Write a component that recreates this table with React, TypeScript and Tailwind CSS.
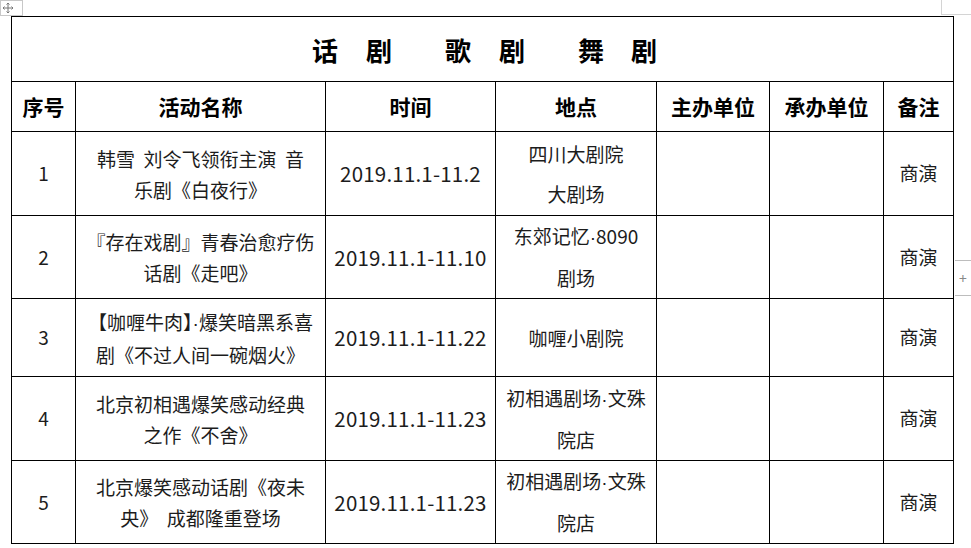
import React from "react";

type Row = {
  no: string;
  name: React.ReactNode;
  time: string;
  place: React.ReactNode;
  note: string;
};

// half-width middle dot, as in the source document
const Dot = () => <span style={{ fontFamily: '"Liberation Sans", sans-serif' }}>·</span>;

const rows: Row[] = [
  {
    no: "1",
    name: (
      <>
        韩雪&nbsp; 刘令飞领衔主演&nbsp; 音
        <br />
        乐剧《白夜行》
      </>
    ),
    time: "2019.11.1-11.2",
    place: (
      <>
        四川大剧院
        <br />
        大剧场
      </>
    ),
    note: "商演",
  },
  {
    no: "2",
    name: (
      <>
        『存在戏剧』青春治愈疗伤
        <br />
        话剧《走吧》
      </>
    ),
    time: "2019.11.1-11.10",
    place: (
      <>
        东郊记忆<Dot />8090
        <br />
        剧场
      </>
    ),
    note: "商演",
  },
  {
    no: "3",
    name: (
      <>
        【咖喱牛肉】<Dot />爆笑暗黑系喜
        <br />
        剧《不过人间一碗烟火》
      </>
    ),
    time: "2019.11.1-11.22",
    place: <>咖喱小剧院</>,
    note: "商演",
  },
  {
    no: "4",
    name: (
      <>
        北京初相遇爆笑感动经典
        <br />
        之作《不舍》
      </>
    ),
    time: "2019.11.1-11.23",
    place: (
      <>
        初相遇剧场<Dot />文殊
        <br />
        院店
      </>
    ),
    note: "商演",
  },
  {
    no: "5",
    name: (
      <>
        北京爆笑感动话剧《夜未
        <br />
        央》&nbsp; 成都隆重登场
      </>
    ),
    time: "2019.11.1-11.23",
    place: (
      <>
        初相遇剧场<Dot />文殊
        <br />
        院店
      </>
    ),
    note: "商演",
  },
];

const rowHeights = ["h-[84px]", "h-[83px]", "h-[78px]", "h-[84px]", "h-[83px]"];

const headers = ["序号", "活动名称", "时间", "地点", "主办单位", "承办单位", "备注"];

export default function App() {
  return (
    <div
      className="relative w-[971px] h-[548px] overflow-hidden bg-white text-[#1c1c1c]"
      style={{ fontFamily: '"Noto Sans CJK SC", "Noto Sans", sans-serif' }}
    >
      {/* table move handle */}
      <div className="absolute left-0 top-0 w-[23px] h-[16px] border border-[#c8c8c8] bg-white flex items-center justify-start pl-[1px]">
        <svg width="12" height="12" viewBox="0 0 12 12" fill="none" stroke="#777" strokeWidth="1">
          <path d="M6 1v10M1 6h10M4.5 2.5 6 1l1.5 1.5M4.5 9.5 6 11l1.5-1.5M2.5 4.5 1 6l1.5 1.5M9.5 4.5 11 6 9.5 7.5" />
        </svg>
      </div>
      {/* right margin marks */}
      <div className="absolute left-[941px] top-0 w-[30px] h-[15px] border-l border-b border-[#d4d4d4]" />
      <div className="absolute left-[955px] top-[260px] w-[16px] h-[36px] border-t border-b border-[#bdbdbd] flex items-center justify-center text-[14px] leading-none text-[#888]">
        +
      </div>

      <div className="pt-[16px] pl-[11px]">
        <table className="table-fixed border-collapse w-[942px]">
          <colgroup>
            <col className="w-[64px]" />
            <col className="w-[250px]" />
            <col className="w-[170px]" />
            <col className="w-[161px]" />
            <col className="w-[113px]" />
            <col className="w-[114px]" />
            <col className="w-[70px]" />
          </colgroup>
          <thead>
            <tr className="h-[65px]">
              <th colSpan={7} className="border-[1.5px] border-black text-center text-[26px] font-bold text-black">
                <span className="inline-flex items-center pl-[4px]">
                  <span>话</span>
                  <span className="ml-[28px]">剧</span>
                  <span className="ml-[53px]">歌</span>
                  <span className="ml-[28px]">剧</span>
                  <span className="ml-[53px]">舞</span>
                  <span className="ml-[27px]">剧</span>
                </span>
              </th>
            </tr>
            <tr className="h-[50px]">
              {headers.map((h) => (
                <th
                  key={h}
                  className="border-[1.5px] border-black text-center text-[21px] font-bold text-black whitespace-nowrap"
                >
                  {h}
                </th>
              ))}
            </tr>
          </thead>
          <tbody>
            {rows.map((r, i) => (
              <tr key={r.no} className={rowHeights[i]}>
                <td className="border-[1.5px] border-black text-center text-[19px]">{r.no}</td>
                <td className="border-[1.5px] border-black text-center text-[19px] leading-[31px] whitespace-nowrap">
                  {r.name}
                </td>
                <td className="border-[1.5px] border-black text-center text-[20.5px] tracking-[0.2px] whitespace-nowrap">
                  {r.time}
                </td>
                <td className="border-[1.5px] border-black text-center text-[19px] leading-[40px] whitespace-nowrap">
                  {r.place}
                </td>
                <td className="border-[1.5px] border-black" />
                <td className="border-[1.5px] border-black" />
                <td className="border-[1.5px] border-black text-center text-[19px]">{r.note}</td>
              </tr>
            ))}
          </tbody>
        </table>
      </div>
    </div>
  );
}
